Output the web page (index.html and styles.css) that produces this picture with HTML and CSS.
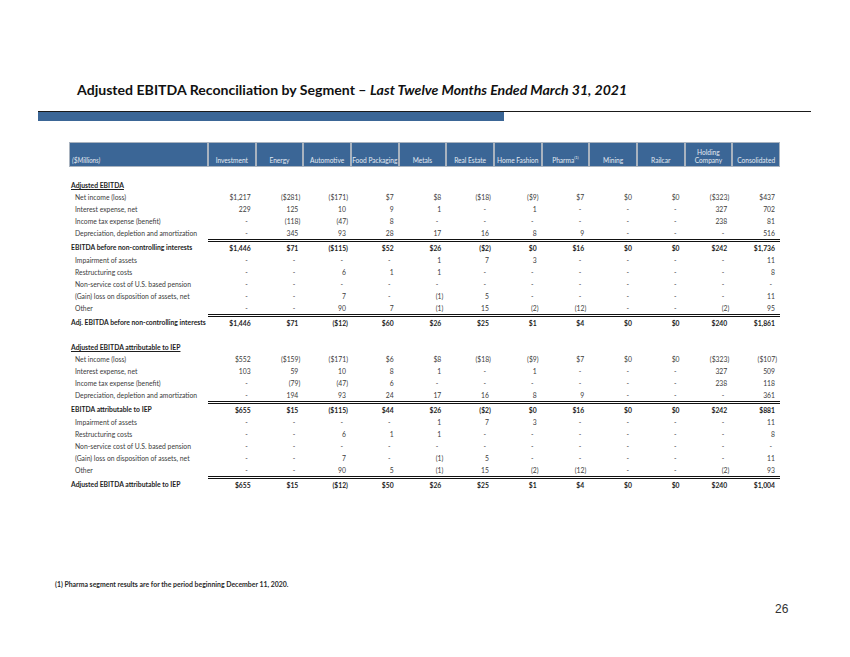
FILE: index.html
```html
<!DOCTYPE html>
<html>
<head>
<meta charset="utf-8">
<link rel="stylesheet" href="styles.css">
</head>
<body>
<div class="page">
  <h1 class="title">Adjusted EBITDA Reconciliation by Segment – <em>Last Twelve Months Ended March 31, 2021</em></h1>
  <div class="rule"><div class="rule-bar"></div></div>

  <table class="recon">
    <colgroup>
      <col class="c-label">
      <col><col><col><col><col><col><col><col><col><col><col><col>
    </colgroup>
    <thead>
      <tr>
        <th class="h-label">($Millions)</th>
        <th>Investment</th><th>Energy</th><th>Automotive</th><th>Food Packaging</th><th>Metals</th><th>Real Estate</th><th>Home Fashion</th><th>Pharma<sup>(1)</sup></th><th>Mining</th><th>Railcar</th><th>Holding<br>Company</th><th>Consolidated</th>
      </tr>
    </thead>
    <tbody>
      <tr class="spacer"><td colspan="13"></td></tr>
      <tr class="sec"><td colspan="13">Adjusted EBITDA</td></tr>
      <tr><td>Net income (loss)</td><td>$1,217</td><td class="n">($281)</td><td class="n">($171)</td><td>$7</td><td>$8</td><td class="n">($18)</td><td class="n">($9)</td><td>$7</td><td>$0</td><td>$0</td><td class="n">($323)</td><td>$437</td></tr>
      <tr><td>Interest expense, net</td><td>229</td><td>125</td><td>10</td><td>9</td><td>1</td><td class="m">-</td><td>1</td><td class="m">-</td><td class="m">-</td><td class="m">-</td><td>327</td><td>702</td></tr>
      <tr><td>Income tax expense (benefit)</td><td class="m">-</td><td class="n">(118)</td><td class="n">(47)</td><td>8</td><td class="m">-</td><td class="m">-</td><td class="m">-</td><td class="m">-</td><td class="m">-</td><td class="m">-</td><td>238</td><td>81</td></tr>
      <tr><td>Depreciation, depletion and amortization</td><td class="m">-</td><td>345</td><td>93</td><td>28</td><td>17</td><td>16</td><td>8</td><td>9</td><td class="m">-</td><td class="m">-</td><td class="m">-</td><td>516</td></tr>
      <tr class="tot"><td>EBITDA before non-controlling interests</td><td>$1,446</td><td>$71</td><td class="n">($115)</td><td>$52</td><td>$26</td><td class="n">($2)</td><td>$0</td><td>$16</td><td>$0</td><td>$0</td><td>$242</td><td>$1,736</td></tr>
      <tr><td>Impairment of assets</td><td class="m">-</td><td class="m">-</td><td class="m">-</td><td class="m">-</td><td>1</td><td>7</td><td>3</td><td class="m">-</td><td class="m">-</td><td class="m">-</td><td class="m">-</td><td>11</td></tr>
      <tr><td>Restructuring costs</td><td class="m">-</td><td class="m">-</td><td>6</td><td>1</td><td>1</td><td class="m">-</td><td class="m">-</td><td class="m">-</td><td class="m">-</td><td class="m">-</td><td class="m">-</td><td>8</td></tr>
      <tr><td>Non-service cost of U.S. based pension</td><td class="m">-</td><td class="m">-</td><td class="m">-</td><td class="m">-</td><td class="m">-</td><td class="m">-</td><td class="m">-</td><td class="m">-</td><td class="m">-</td><td class="m">-</td><td class="m">-</td><td class="m">-</td></tr>
      <tr><td>(Gain) loss on disposition of assets, net</td><td class="m">-</td><td class="m">-</td><td>7</td><td class="m">-</td><td class="n">(1)</td><td>5</td><td class="m">-</td><td class="m">-</td><td class="m">-</td><td class="m">-</td><td class="m">-</td><td>11</td></tr>
      <tr><td>Other</td><td class="m">-</td><td class="m">-</td><td>90</td><td>7</td><td class="n">(1)</td><td>15</td><td class="n">(2)</td><td class="n">(12)</td><td class="m">-</td><td class="m">-</td><td class="n">(2)</td><td>95</td></tr>
      <tr class="tot"><td>Adj. EBITDA before non-controlling interests</td><td>$1,446</td><td>$71</td><td class="n">($12)</td><td>$60</td><td>$26</td><td>$25</td><td>$1</td><td>$4</td><td>$0</td><td>$0</td><td>$240</td><td>$1,861</td></tr>

      <tr class="spacer2"><td colspan="13"></td></tr>
      <tr class="sec"><td colspan="13">Adjusted EBITDA attributable to IEP</td></tr>
      <tr><td>Net income (loss)</td><td>$552</td><td class="n">($159)</td><td class="n">($171)</td><td>$6</td><td>$8</td><td class="n">($18)</td><td class="n">($9)</td><td>$7</td><td>$0</td><td>$0</td><td class="n">($323)</td><td class="n">($107)</td></tr>
      <tr><td>Interest expense, net</td><td>103</td><td>59</td><td>10</td><td>8</td><td>1</td><td class="m">-</td><td>1</td><td class="m">-</td><td class="m">-</td><td class="m">-</td><td>327</td><td>509</td></tr>
      <tr><td>Income tax expense (benefit)</td><td class="m">-</td><td class="n">(79)</td><td class="n">(47)</td><td>6</td><td class="m">-</td><td class="m">-</td><td class="m">-</td><td class="m">-</td><td class="m">-</td><td class="m">-</td><td>238</td><td>118</td></tr>
      <tr><td>Depreciation, depletion and amortization</td><td class="m">-</td><td>194</td><td>93</td><td>24</td><td>17</td><td>16</td><td>8</td><td>9</td><td class="m">-</td><td class="m">-</td><td class="m">-</td><td>361</td></tr>
      <tr class="tot"><td>EBITDA attributable to IEP</td><td>$655</td><td>$15</td><td class="n">($115)</td><td>$44</td><td>$26</td><td class="n">($2)</td><td>$0</td><td>$16</td><td>$0</td><td>$0</td><td>$242</td><td>$881</td></tr>
      <tr><td>Impairment of assets</td><td class="m">-</td><td class="m">-</td><td class="m">-</td><td class="m">-</td><td>1</td><td>7</td><td>3</td><td class="m">-</td><td class="m">-</td><td class="m">-</td><td class="m">-</td><td>11</td></tr>
      <tr><td>Restructuring costs</td><td class="m">-</td><td class="m">-</td><td>6</td><td>1</td><td>1</td><td class="m">-</td><td class="m">-</td><td class="m">-</td><td class="m">-</td><td class="m">-</td><td class="m">-</td><td>8</td></tr>
      <tr><td>Non-service cost of U.S. based pension</td><td class="m">-</td><td class="m">-</td><td class="m">-</td><td class="m">-</td><td class="m">-</td><td class="m">-</td><td class="m">-</td><td class="m">-</td><td class="m">-</td><td class="m">-</td><td class="m">-</td><td class="m">-</td></tr>
      <tr><td>(Gain) loss on disposition of assets, net</td><td class="m">-</td><td class="m">-</td><td>7</td><td class="m">-</td><td class="n">(1)</td><td>5</td><td class="m">-</td><td class="m">-</td><td class="m">-</td><td class="m">-</td><td class="m">-</td><td>11</td></tr>
      <tr><td>Other</td><td class="m">-</td><td class="m">-</td><td>90</td><td>5</td><td class="n">(1)</td><td>15</td><td class="n">(2)</td><td class="n">(12)</td><td class="m">-</td><td class="m">-</td><td class="n">(2)</td><td>93</td></tr>
      <tr class="tot"><td>Adjusted EBITDA attributable to IEP</td><td>$655</td><td>$15</td><td class="n">($12)</td><td>$50</td><td>$26</td><td>$25</td><td>$1</td><td>$4</td><td>$0</td><td>$0</td><td>$240</td><td>$1,004</td></tr>
    </tbody>
  </table>

  <p class="footnote">(1) Pharma segment results are for the period beginning December 11, 2020.</p>
  <div class="page-num">26</div>
</div>
</body>
</html>
```

FILE: styles.css
```css
html, body {
  margin: 0;
  padding: 0;
  background: #ffffff;
}

.page {
  width: 850px;
  height: 657px;
  position: relative;
  font-family: Lato, "Open Sans", sans-serif;
  color: #3a3a3a;
}

.title {
  margin: 0;
  padding: 81px 0 0 77px;
  font-size: 14.1px;
  line-height: 17px;
  font-weight: 700;
  color: #111;
}

.title em {
  font-style: italic;
}

.rule {
  margin: 13px 0 0 38px;
  width: 773px;
  border-top: 1.5px solid #1a1a1a;
}

.rule-bar {
  width: 466px;
  height: 9px;
  background: #3b6696;
}

.recon {
  margin: 21px 0 0 69px;
  width: 711px;
  table-layout: fixed;
  border-collapse: separate;
  border-spacing: 0;
  font-size: 6.8px;
}

.recon col.c-label {
  width: 139px;
}

.recon th {
  height: 25px;
  box-sizing: border-box;
  padding: 0 0 2px;
  background: #3b6696;
  border: 1px solid #a9b3bf;
  color: #e4eaf2;
  font-weight: 400;
  font-size: 6.6px;
  line-height: 8px;
  vertical-align: bottom;
  text-align: center;
  white-space: nowrap;
  overflow: hidden;
}

.recon th.h-label {
  text-align: left;
  font-style: italic;
  padding-left: 2px;
}

.recon th sup {
  font-size: 4px;
  vertical-align: 4px;
  line-height: 0;
}

.recon td {
  height: 12px;
  padding: 0 5px 0 0;
  line-height: 12px;
  text-align: right;
  white-space: nowrap;
  color: #3c3c3c;
}

.recon td:first-child {
  text-align: left;
  padding-left: 6px;
}

.recon td.n {
  padding-right: 3px;
}

.recon td.m {
  padding-right: 8px;
}

.recon tr.spacer td {
  height: 12px;
  line-height: 12px;
}

.recon tr.spacer2 td {
  height: 12px;
  line-height: 12px;
}

.recon tr.sec td {
  padding-left: 2px;
  font-weight: 700;
  text-decoration: underline;
  color: #1e1e1e;
}

.recon tr.tot td {
  font-weight: 700;
  color: #1e1e1e;
}

.recon tr.tot td:first-child {
  padding-left: 2px;
}

.recon tr.tot td:not(:first-child) {
  border-top: 3px double #111;
}

.footnote {
  margin: 0;
  position: absolute;
  left: 55px;
  top: 579px;
  font-size: 6.9px;
  line-height: 10px;
  font-weight: 700;
  color: #2a2a2a;
}

.page-num {
  position: absolute;
  left: 775px;
  top: 602px;
  font-family: "Liberation Sans", Arial, sans-serif;
  font-size: 12px;
  line-height: 14px;
  color: #333;
}
```
